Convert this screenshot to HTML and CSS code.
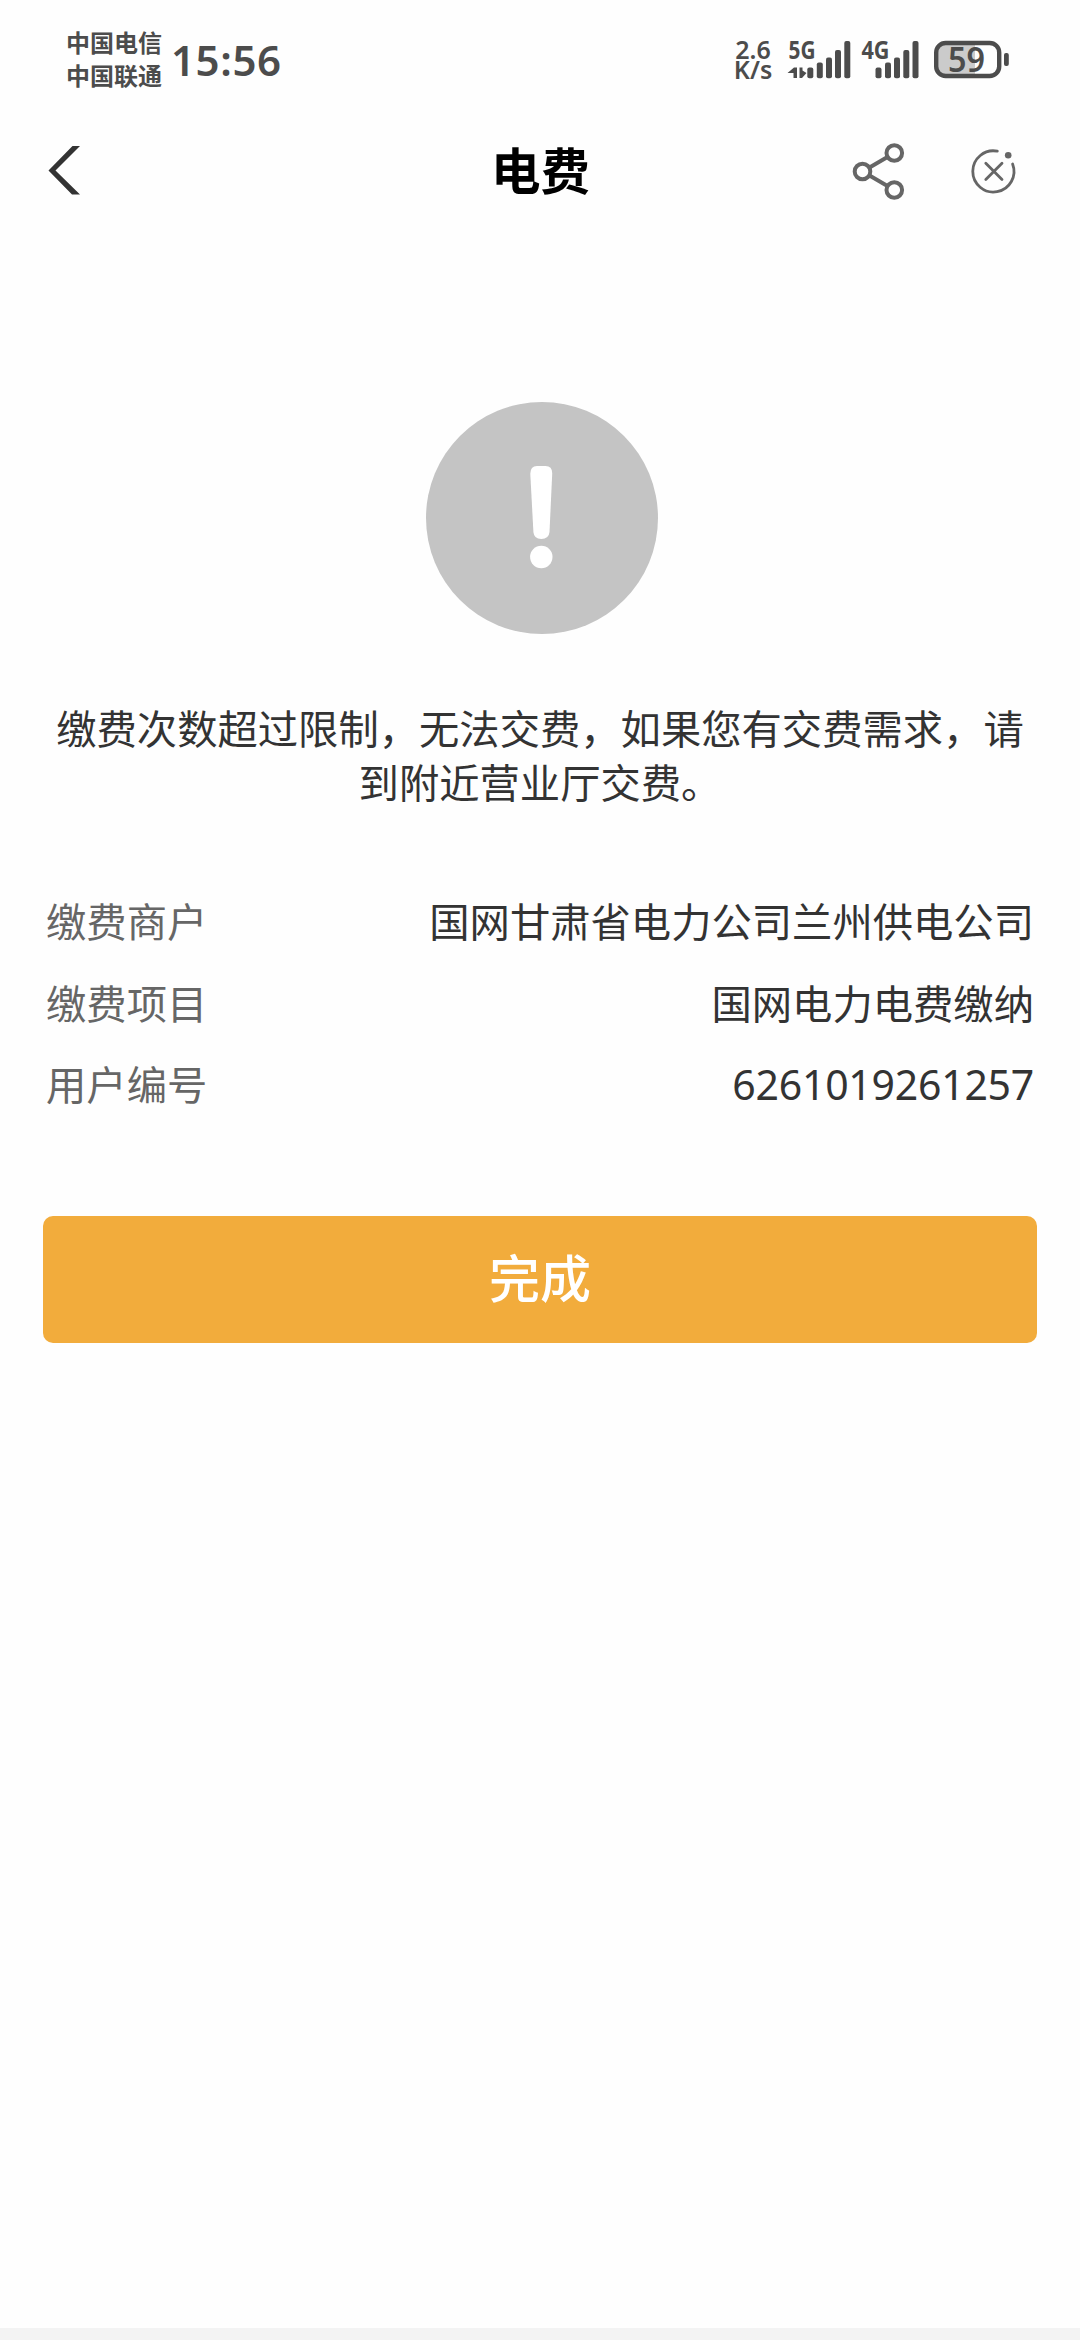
FILE: index.html
```html
<!DOCTYPE html>
<html lang="zh-CN">
<head>
<meta charset="utf-8">
<title>电费</title>
<link rel="stylesheet" href="styles.css">
</head>
<body>
<div class="screen">
  <div class="status">
    <div class="carriers"><span>中国电信</span><span>中国联通</span></div>
    <div class="clock">15:56</div>
    <div class="speed"><span>2.6</span><span>K/s</span></div>
    <svg class="signals" width="134" height="60" viewBox="787 30 134 60">
      <g class="net">
        <text x="788.5" y="59" textLength="27" lengthAdjust="spacingAndGlyphs">5G</text>
        <text x="861.5" y="59" textLength="28" lengthAdjust="spacingAndGlyphs">4G</text>
      </g>
      <path d="M787.5 73L794 67.5H797V78H793.5V73Z M799.5 67.5H802.5V70.5L806.5 73L802 78H799.5Z"/>
      <rect x="807.3" y="67.5" width="6" height="10.7" rx="2"/>
      <rect x="816.8" y="62.5" width="6" height="15.7" rx="2"/>
      <rect x="826" y="57.5" width="6" height="20.7" rx="2"/>
      <rect x="835" y="50" width="6" height="28.2" rx="2"/>
      <rect x="844.3" y="41" width="6" height="37.2" rx="2"/>
      <rect x="875.5" y="67.5" width="6" height="10.7" rx="2"/>
      <rect x="885" y="62.5" width="6" height="15.7" rx="2"/>
      <rect x="894" y="57.5" width="6" height="20.7" rx="2"/>
      <rect x="903.3" y="50" width="6" height="28.2" rx="2"/>
      <rect x="912.5" y="41" width="6" height="37.2" rx="2"/>
    </svg>
    <svg class="battery" width="78" height="60" viewBox="933 30 78 60">
      <path class="charge" d="M946 43H975V76H946Q936 76 936 66V53Q936 43 946 43Z"/>
      <rect class="shell" x="936.2" y="43" width="63" height="33" rx="9.5"/>
      <rect x="1004" y="53" width="4.8" height="13" rx="2"/>
      <text x="948" y="71.8" textLength="37" lengthAdjust="spacingAndGlyphs">59</text>
    </svg>
  </div>

  <header class="navbar">
    <svg class="back" width="34" height="52" viewBox="47 145 34 52"><path d="M72.5 146H80L55.5 170.5L80 194.5H72L48.5 170.5Z"/></svg>
    <h1 class="title">电费</h1>
    <div class="actions">
      <svg width="56" height="60" viewBox="850 140 56 60">
        <g class="share">
          <path d="M869.5 166.5L887.5 156M869.5 174.5L887.5 185"/>
          <circle cx="894.3" cy="152" r="7.8"/><circle cx="862.5" cy="170.5" r="7.8"/><circle cx="894.3" cy="189" r="7.8"/>
        </g>
      </svg>
      <svg width="48" height="60" viewBox="970 140 48 60">
        <g class="close">
          <path d="M997.3 150.2A20.6 20.6 0 1 0 1012.6 163"/>
          <path d="M985.8 162.3L1002 178.6M1002 162.3L985.8 178.6"/>
        </g>
        <circle class="dot" cx="1008.2" cy="154.2" r="3.3"/>
      </svg>
    </div>
  </header>

  <main class="result">
    <svg class="notice" width="232" height="232" viewBox="0 0 232 232">
      <circle class="disc" cx="116" cy="116" r="116"/>
      <path class="mark" d="M111 64H119.500Q126.500 64 126.200 72L123.500 130Q122.800 137 115.300 137Q108 137 107.400 130L104.300 72Q104.200 64 111 64Z"/>
      <circle class="mark" cx="115.300" cy="155" r="11.200"/>
    </svg>
    <p class="message">缴费次数超过限制，无法交费，如果您有交费需求，请到附近营业厅交费。</p>
    <dl class="details">
      <div class="row"><dt>缴费商户</dt><dd>国网甘肃省电力公司兰州供电公司</dd></div>
      <div class="row"><dt>缴费项目</dt><dd>国网电力电费缴纳</dd></div>
      <div class="row"><dt>用户编号</dt><dd class="number">6261019261257</dd></div>
    </dl>
    <button class="done" type="button">完成</button>
  </main>
  <footer class="bottom"></footer>
</div>
</body>
</html>
```
FILE: styles.css
```css
* { box-sizing: border-box; }
body {
  margin: 0;
  background: #fefefe;
  color: #333;
  font-family: "Noto Sans CJK SC", sans-serif;
}
svg { display: block; flex: none; overflow: visible; }
.screen { width: 1080px; height: 2340px; display: flex; flex-direction: column; }

.status {
  height: 120px;
  padding: 0 69px 0 66px;
  display: flex;
  align-items: flex-start;
  color: #4c4c4c;
  fill: #4c4c4c;
}
.carriers {
  width: 105px;
  padding-top: 25px;
  display: flex;
  flex-direction: column;
  font-size: 24px;
  line-height: 33px;
  font-weight: 700;
  white-space: nowrap;
}
.clock {
  width: 562px;
  padding-top: 30px;
  font: 600 42px/60px "Noto Sans", sans-serif;
  letter-spacing: 0.6px;
}
.speed {
  width: 40px;
  margin-right: 14px;
  padding-top: 39px;
  display: flex;
  flex-direction: column;
  align-items: center;
  font: 600 25px/20px "Noto Sans", sans-serif;
}
.signals, .battery { margin-top: 30px; }
.battery { margin-left: 12px; }
.net { font: 700 25px "Noto Sans", sans-serif; }
.battery text { font: 600 34px "Noto Sans", sans-serif; }
.charge { fill: #cbcbcb; }
.shell { fill: none; stroke: #4c4c4c; stroke-width: 4.4; }

.navbar {
  height: 102px;
  padding: 0 62px 0 47px;
  display: grid;
  grid-template-columns: 1fr auto 1fr;
  align-items: center;
}
.back { fill: #333; }
.title {
  margin: 0;
  padding: 0 0 4px 16px;
  font-size: 49.5px;
  line-height: 72px;
  font-weight: 700;
  color: #000;
}
.actions { display: flex; justify-content: flex-end; gap: 64px; }
.share { fill: none; stroke: #666; stroke-width: 4; }
.close { fill: none; stroke: #666; stroke-width: 2.8; stroke-linecap: round; }
.dot { fill: #666; }

.result {
  flex: 1;
  padding: 180px 43px 0;
  display: flex;
  flex-direction: column;
  align-items: center;
}
.notice { margin-left: 4px; }
.disc { fill: #c4c4c4; }
.mark { fill: #fff; }
.message {
  width: 970px;
  margin: 66px 0 0;
  font-size: 40.32px;
  line-height: 54px;
  text-align: center;
}
.details {
  width: 988px;
  margin: 71px 0 0;
  font-size: 40.32px;
}
.row { height: 81.5px; display: flex; justify-content: space-between; align-items: center; }
dt { color: #666; }
dd { margin: 0; }
.number { padding-top: 3px; font-family: "Noto Sans", sans-serif; font-size: 41px; letter-spacing: -0.25px; }
.done {
  width: 994px;
  height: 127px;
  margin-top: 92px;
  padding: 0 0 6px;
  border: 0;
  border-radius: 10px;
  background: #f2ac3c;
  color: #fff;
  font: 500 51px/76px "Noto Sans CJK SC", sans-serif;
}
.bottom { height: 12px; background: #f3f3f3; }
```
